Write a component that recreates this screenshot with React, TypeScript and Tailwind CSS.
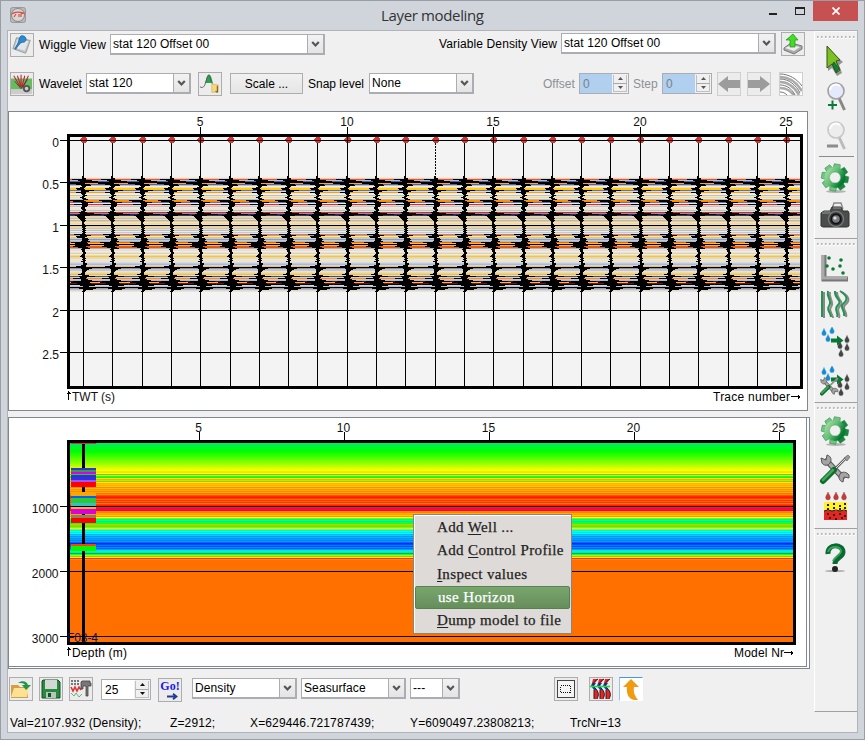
import React from "react";

type Kids = { children?: React.ReactNode };

/* ---------- basic controls ---------- */

function IconButton({ children, className = "" }: Kids & { className?: string }) {
  return (
    <div className={`flex h-6 w-6 shrink-0 items-center justify-center overflow-hidden border border-[#adadb0] bg-[#ececec] ${className}`}>
      {children}
    </div>
  );
}

function Select({ value, className = "" }: { value: string; className?: string }) {
  return (
    <div className={`flex h-[21px] shrink-0 border border-r-2 border-b-2 border-[#abadb3] bg-white ${className}`}>
      <span className="min-w-0 flex-1 pl-[2px] leading-[19px] tracking-[0.1px] whitespace-nowrap">{value}</span>
      <div className="flex w-4 items-center justify-center border-l border-[#abadb3] bg-linear-to-b from-[#f2f2f2] to-[#e4e4e4]">
        <svg width="9" height="7" viewBox="0 0 9 7">
          <path d="M1.2 1l3.3 3.4L7.8 1" fill="none" stroke="#555" strokeWidth="2.2" />
        </svg>
      </div>
    </div>
  );
}

function Spinner({ value, disabled = false }: { value: string; disabled?: boolean }) {
  return (
    <div className={`flex h-[21px] w-[50px] shrink-0 border border-[#abadb3] ${disabled ? "bg-[#b1cfee] text-[#7b8087]" : "bg-white"}`}>
      <span className="flex-1 pl-[3px] leading-5">{value}</span>
      <div className="flex w-4 flex-col bg-[#f2f2f2] p-px">
        {[0, 1].map((k) => (
          <div key={k} className={`flex flex-1 items-center justify-center border-r border-l border-[#c0c0c0] bg-[#f0f0f0] ${k ? "border-t border-b border-t-[#a8a8a8]" : ""}`}>
            <svg width="5" height="3" viewBox="0 0 5 3">
              <path d={k ? "M0 0h5L2.5 3z" : "M0 3h5L2.5 0z"} fill={disabled ? "#555" : "#111"} />
            </svg>
          </div>
        ))}
      </div>
    </div>
  );
}

/* ---------- seismic panel ---------- */

const traces = Array.from({ length: 25 }, (_, i) => Math.round(83 + i * 29.3));

// y, colour, extent to the left of the trace, extent to the right
const rows: [number, string, number, number][] = [
  [176, "#f2f1ea", 1, 0], [177, "#f0eddc", 1, 0], [178, "#cdd2e4", 1, 2], [179, "#ff4a10", 11, 2],
  [180, "#b4bad0", 5, 8], [181, "#5a6298", 3, 14], [182, "#dddde6", 2, 5], [183, "#ffa51a", 14, 1],
  [184, "#5b629a", 7, 6], [185, "#b8bdd2", 2, 7], [186, "#f2efe2", 1, 2], [187, "#f0deb0", 3, 1],
  [188, "#ffcc10", 7, 0], [189, "#ffc908", 6, 1], [190, "#6870a8", 2, 10], [191, "#d8dae4", 2, 5],
  [192, "#ff9b12", 7, 2], [193, "#eee9d8", 2, 2], [194, "#f0f0ea", 1, 1], [195, "#b6c1d0", 0, 3],
  [196, "#eee6c8", 1, 1], [197, "#f6dc91", 3, 0], [198, "#eee6ce", 1, 2], [199, "#afb9cb", 0, 4],
  [200, "#ff9600", 13, 0], [201, "#ff8700", 10, 2], [202, "#6d759e", 2, 9], [203, "#edeae4", 1, 4],
  [204, "#ee2710", 9, 4], [205, "#d9dce7", 1, 4], [206, "#bec5d9", 1, 3], [207, "#f1ead3", 2, 1],
  [208, "#f5e6be", 2, 1], [209, "#e4e4e8", 1, 2], [210, "#bac4d8", 0, 2], [211, "#ecddbd", 2, 1],
  [212, "#d8281f", 4, 3], [213, "#8790b4", 3, 10], [214, "#202c68", 5, 17], [215, "#303765", 8, 6],
  [216, "#d8d6ce", 6, 1], [217, "#efd590", 5, 1], [218, "#b6bdd0", 4, 2], [219, "#f4ddb0", 3, 1],
  [220, "#aeb9ce", 2, 2], [221, "#f1ca84", 1, 1], [222, "#eee2bf", 1, 0], [223, "#f3d897", 1, 0],
  [224, "#f5dfa6", 1, 1], [225, "#151515", 1, 1], [226, "#d0cec9", 1, 2], [227, "#f3d793", 1, 1],
  [228, "#bcc3d3", 0, 2], [229, "#f2e2b2", 1, 1], [230, "#b6bed0", 0, 2], [231, "#f3ecd5", 1, 1],
  [232, "#c3c9db", 0, 2], [233, "#e4e4e7", 1, 1], [234, "#ff731b", 9, 2], [235, "#9ea6bd", 3, 7],
  [236, "#e3e8e8", 7, 3], [237, "#ffcb20", 6, 1], [238, "#c5cad8", 1, 4], [239, "#8f9bb8", 1, 5],
  [240, "#c1c7d6", 1, 4], [241, "#b5b8c4", 2, 6], [242, "#ff5612", 12, 3], [243, "#f5cc33", 8, 4],
  [244, "#262422", 14, 15], [245, "#f6bb27", 8, 6], [246, "#f25918", 10, 2], [247, "#d8561f", 5, 4],
  [248, "#a9b1c8", 1, 6], [249, "#f3e5bf", 2, 1], [250, "#e4dfc9", 1, 1], [251, "#eeeaf0", 1, 1],
  [252, "#f3e3b2", 0, 2], [253, "#d2d2d4", 0, 2], [254, "#eeeae6", 1, 1], [255, "#f1d98e", 2, 1],
  [256, "#f5c737", 3, 1], [257, "#e3d6b1", 1, 1], [258, "#d8dae2", 0, 2], [259, "#f5e4c2", 1, 1],
  [260, "#e7e4de", 0, 2], [261, "#f5e5b6", 2, 1], [262, "#d7dce4", 0, 1], [263, "#c0c9dc", 0, 3],
  [264, "#aeb9d3", 0, 3], [265, "#d2d6dc", 2, 2], [266, "#f3c441", 7, 2], [267, "#454b73", 8, 11],
  [268, "#8a90ac", 2, 8], [269, "#c2c6dc", 1, 5], [270, "#bdc6dd", 1, 3], [271, "#f3e3b8", 1, 2],
  [272, "#e1dcc9", 1, 1], [273, "#f6d267", 2, 1], [274, "#f4c13b", 5, 1], [275, "#dcdbe1", 1, 5],
  [276, "#414c82", 4, 11], [277, "#e9cf95", 3, 3], [278, "#ff871d", 10, 2], [279, "#c1c5d7", 2, 4],
  [280, "#b1b9d0", 2, 8], [281, "#242938", 10, 14], [282, "#f3bd31", 12, 6], [283, "#8c0c12", 6, 7],
  [284, "#282827", 13, 15], [285, "#d2d5dc", 3, 11], [286, "#b5becd", 0, 5], [287, "#191015", 13, 15],
  [288, "#9a9dab", 4, 12], [289, "#b4bccd", 0, 9], [290, "#dadbd8", 0, 2], [291, "#eee4c9", 1, 1],
];

function Axis({ x, y, children, anchor = "end" }: Kids & { x: number; y: number; anchor?: "end" | "middle" | "start" }) {
  return (
    <text x={x} y={y} textAnchor={anchor} fontSize="12" fill="#111">
      {children}
    </text>
  );
}

function SeismicPlot() {
  return (
    <svg className="block" width="798" height="298" viewBox="9 112 798 298" shapeRendering="crispEdges">
      <rect x="67" y="134" width="736" height="255" fill="#000" />
      <rect x="70" y="137" width="730" height="249" fill="#f3f3f3" />
      {rows.map(([y, c]) => (
        <rect key={y} x="70" y={y} width="730" height="1" fill={c} />
      ))}
      {traces.map((x, i) => (
        <g key={x}>
          {i === 12 ? (
            <path d={`M${x + 0.5} 137V178`} stroke="#000" strokeDasharray="2 1" />
          ) : (
            <rect x={x} y="137" width="1" height="41" />
          )}
          <path d={`M${x - 1} 137h3l2 2v2l-2 2h-3l-2-2v-2z`} fill="#d83434" />
          <rect x={x} y="178" width="1" height="208" />
          {rows.map(([y, , l, r]) => {
            const a = Math.max(70, x - l);
            return <rect key={y} x={a} y={y} width={Math.min(800, x + r + 1) - a} height="1" />;
          })}
        </g>
      ))}
      {["0", "0.5", "1", "1.5", "2", "2.5"].map((t, i) => {
        const y = [140, 182, 225, 267, 310, 352][i];
        return (
          <g key={t}>
            <rect x="60" y={y} width="740" height="1" />
            <Axis x={59} y={y + 7}>{t}</Axis>
          </g>
        );
      })}
      {[5, 10, 15, 20, 25].map((n) => (
        <g key={n}>
          <rect x={traces[n - 1]} y="127" width="1" height="18" />
          <Axis x={traces[n - 1]} y={126} anchor="middle">{n}</Axis>
        </g>
      ))}
      <path d="M68.5 391v9M66.5 393.5h4M67.5 392.5h2" stroke="#000" />
      <path d="M791 396.5h9M798.5 394.5v4M799.5 395.5v2" stroke="#000" />
      <Axis x={72} y={401} anchor="start">TWT (s)</Axis>
      <text x="713" y="401" fontSize="12" textLength="77">Trace number</text>
    </svg>
  );
}

/* ---------- layer model panel ---------- */

const layers: [number, string][] = [
  [470, "#ffff00"], [471, "#e6f000"], [472, "#ffe000"], [473, "#ffff00"], [474, "#38e830"], [475, "#fff000"],
  [476, "#30ff00"], [477, "#00ff20"], [478, "#ffe000"], [479, "#ffa800"], [480, "#ffc800"], [481, "#50f010"],
  [482, "#ffe800"], [483, "#ffb000"], [484, "#ffc000"], [485, "#ffb000"], [486, "#ffd000"], [487, "#ff8800"],
  [488, "#ffc000"], [489, "#ff9000"], [490, "#ffa800"], [491, "#ff8800"], [492, "#ffb000"], [493, "#ff7000"],
  [494, "#ff9000"], [495, "#ff5000"], [496, "#ff2800"], [497, "#ff1800"], [498, "#ff3800"], [499, "#ff7000"],
  [500, "#ff3000"], [501, "#ff6800"], [502, "#ff3000"], [503, "#ff8000"], [504, "#ff4000"], [505, "#ff2000"],
  [506, "#000000"], [507, "#ff2000"], [508, "#ff0040"], [509, "#ff0060"], [510, "#ff0038"], [511, "#ff9000"],
  [512, "#ff8000"], [513, "#ffb000"], [514, "#ffa000"], [515, "#ffd000"], [516, "#ff9000"], [517, "#ffff00"],
  [518, "#70ff00"], [519, "#00ff60"], [520, "#00ff90"], [521, "#00e8a0"], [522, "#00ff60"], [523, "#20ff00"],
  [524, "#60ff00"], [525, "#e0b000"], [526, "#60e800"], [527, "#90f000"], [528, "#ffff00"], [529, "#60ff80"],
  [530, "#00ffb0"], [531, "#00ffff"], [532, "#00e0ff"], [533, "#00ffff"], [534, "#00b0ff"], [535, "#00d0ff"],
  [536, "#0090ff"], [537, "#00b8ff"], [538, "#0090ff"], [539, "#00a0ff"], [540, "#0080ff"], [541, "#00a0ff"],
  [542, "#0068ff"], [543, "#0028ff"], [544, "#0048ff"], [545, "#0080ff"], [546, "#0048ff"], [547, "#0090ff"],
  [548, "#0060ff"], [549, "#00a0ff"], [550, "#00e0ff"], [551, "#00ff90"], [552, "#00ff40"], [553, "#0098d0"],
  [554, "#00ff60"], [555, "#a0ff00"], [556, "#ff9800"], [557, "#ffff00"], [558, "#ff3000"], [559, "#ff9800"],
];

const wellLog: [number, number, string][] = [
  [443, 1, "#e03030"], [468, 2, "#3030dc"], [470, 2, "#30a040"], [472, 2, "#dc00dc"], [474, 1, "#30c830"],
  [475, 5, "#3030dc"], [480, 2, "#a050ff"], [482, 5, "#ff0000"], [492, 4, "#ffa500"], [496, 2, "#0060ff"],
  [498, 5, "#30c830"], [503, 3, "#30c0d0"], [507, 2, "#ffb000"], [509, 5, "#dc00dc"], [515, 3, "#908060"],
  [518, 5, "#ff0000"], [544, 2, "#ff4000"], [546, 5, "#00f800"],
];

function ModelPlot() {
  return (
    <svg className="block" width="797" height="248" viewBox="9 418 797 248" shapeRendering="crispEdges">
      <defs>
        <linearGradient id="shallow" x1="0" y1="0" x2="0" y2="1">
          <stop offset="0" stopColor="#00ec60" />
          <stop offset="0.32" stopColor="#00ff00" />
          <stop offset="0.7" stopColor="#80ff00" />
          <stop offset="1" stopColor="#f4ff00" />
        </linearGradient>
      </defs>
      <rect x="67" y="440" width="729" height="205" />
      <rect x="70" y="443" width="723" height="199" fill="#ff7000" />
      <rect x="70" y="443" width="723" height="27" fill="url(#shallow)" />
      {layers.map(([y, c]) => (
        <rect key={y} x="70" y={y} width="723" height="1" fill={c} />
      ))}
      <rect x="82" y="443" width="3" height="199" />
      {wellLog.map(([y, h, c]) => (
        <rect key={y} x="71" y={y} width="25" height={h} fill={c} />
      ))}
      {[1000, 2000, 3000].map((n, i) => {
        const y = 506 + i * 65;
        return (
          <g key={n}>
            <rect x="60" y={y} width="733" height="1" />
            <Axis x={58.5} y={y + 7}>{n}</Axis>
          </g>
        );
      })}
      {[5, 10, 15, 20, 25].map((n, i) => (
        <g key={n}>
          <rect x={199 + i * 145} y="432" width="1" height="8" />
          <Axis x={198.5 + i * 145} y={432} anchor="middle">{n}</Axis>
        </g>
      ))}
      <text x="67" y="642" fontSize="12" textLength="31" fill="#16104c">F03-4</text>
      <path d="M68.5 647v9M66.5 649.5h4M67.5 648.5h2" stroke="#000" />
      <path d="M784 652.5h9M791.5 650.5v4M792.5 651.5v2" stroke="#000" />
      <text x="72" y="657" fontSize="12" textLength="55">Depth (m)</text>
      <text x="734" y="657" fontSize="12" textLength="50">Model Nr</text>
    </svg>
  );
}

/* ---------- icons ---------- */

function Gear() {
  return (
    <svg width="30" height="32" viewBox="0 0 30 32">
      <defs>
        <linearGradient id="gearFill" x1="0" y1="0" x2="1" y2="0.6">
          <stop offset="0" stopColor="#a3dca3" />
          <stop offset="0.5" stopColor="#5fbd72" />
          <stop offset="1" stopColor="#087b32" />
        </linearGradient>
      </defs>
      <ellipse cx="16" cy="28.5" rx="10" ry="1.5" fill="#999" opacity=".7" />
      <g transform="translate(15 14.5)">
        {[0, 45, 90, 135, 180, 225, 270, 315].map((a) => (
          <path key={a} d="M-3.6-8l.6-5.5h6l.6 5.5z" transform={`rotate(${a + 10})`} fill={a > 20 && a < 150 ? "#188741" : "#70c580"} stroke="#2b8247" strokeWidth=".5" />
        ))}
        <circle r="8" fill="none" stroke="url(#gearFill)" strokeWidth="5" />
        <circle r="5.5" fill="#f0f0f0" stroke="#44935a" strokeWidth=".5" />
      </g>
    </svg>
  );
}

function Wrenches() {
  return (
    <g>
      <path d="M5 5l19 20" stroke="#555" strokeWidth="5.5" />
      <path d="M5 5l19 20" stroke="#a9aaa8" strokeWidth="3.5" />
      <path d="M1 4l5 2 1-5c4 1 5 5 3 8s-6 3-8 0zM29 24l-5-1-1 5c-4-1-5-5-3-8s7-2 9 1z" fill="#a4a5a3" stroke="#555" strokeWidth="1" />
      <path d="M13 17L26 4" stroke="#666" strokeWidth="2.6" />
      <path d="M14 16L26 4" stroke="#ddd" />
      <path d="M24 4l4-3 2 2-3 4z" fill="#999" stroke="#555" strokeWidth=".6" />
      <path d="M3 27l11-11" stroke="#106b2d" strokeWidth="6" strokeLinecap="round" />
      <path d="M3 26l10-10" stroke="#40a858" strokeWidth="2.5" strokeLinecap="round" />
    </g>
  );
}

const drop = "M0-5C-1-2-3 0-3 2a3 3 0 006 0C3 0 1-2 0-5z";

function Drops() {
  return (
    <g>
      {[[4, 5], [12, 3], [8, 11]].map(([x, y]) => (
        <path key={x} d={drop} transform={`translate(${x} ${y}) scale(.75)`} fill="#168bd3" stroke="#56b3e6" strokeWidth=".5" />
      ))}
      {[[27, 12], [20, 18], [27, 20], [21, 26]].map(([x, y]) => (
        <path key={`${x}${y}`} d={drop} transform={`translate(${x} ${y}) scale(.75)`} fill="#444" stroke="#777" strokeWidth=".5" />
      ))}
      <path d="M11 11.500h6V8.500l6.500 5-6.500 5v-3h-6z" fill="#087734" />
    </g>
  );
}

function Magnifier({ plus }: { plus: boolean }) {
  return (
    <svg width="30" height="34" viewBox="0 0 30 34">
      <path d="M18 17l5.500 12" stroke={plus ? "#888" : "#bbb"} strokeWidth="3" />
      <circle cx="15" cy="10" r="8" fill={plus ? "#e4eafb" : "#ededed"} stroke={plus ? "#a0a0a0" : "#c7c7c7"} strokeWidth="1.6" />
      <path d="M9 9a6 6 0 0110-4" fill="none" stroke="#fff" strokeWidth="2" />
      {plus ? <path d="M7 24h9M11.5 19.500v9" stroke="#087c38" strokeWidth="2" /> : <path d="M6 26h11" stroke="#8b8b91" strokeWidth="3" />}
    </svg>
  );
}

function Camera() {
  return (
    <svg width="30" height="28" viewBox="0 0 30 28">
      <path d="M12 7l2-6h7l2 6" fill="#eee" stroke="#888" strokeWidth="1.4" />
      <path d="M1 11l3-2h6l2-4h9l2 4h5l1 2v13l-2 1H3l-2-1z" fill="#4b4d4d" stroke="#333" />
      <path d="M2 11h9M4 9h6M13 6h8" stroke="#999" />
      <circle cx="16" cy="17" r="7.500" fill="#2d2f30" stroke="#777" strokeWidth="1.5" />
      <circle cx="16" cy="17" r="4.500" fill="#787b7f" stroke="#111" strokeWidth="1.5" />
      <circle cx="15" cy="16" r="1.6" fill="#ddd" />
    </svg>
  );
}

function Handle() {
  return (
    <svg className="mt-1 block" width="39" height="3" viewBox="0 0 39 3">
      {[0, 1, 2, 3, 4, 5, 6, 7, 8, 9].map((i) => (
        <g key={i}>
          <rect x={i * 4} width="2" height="2" fill="#b6b6b6" />
          <path d={`M${i * 4 + 2} .5v2h-2`} fill="none" stroke="#fff" />
        </g>
      ))}
    </svg>
  );
}

function ToolGroup({ children, className }: Kids & { className: string }) {
  return <div className={`flex shrink-0 flex-col items-center border-b border-l border-b-[#a0a0a0] border-l-white ${className}`}>{children}</div>;
}

function SideBar() {
  return (
    <div className="flex w-[43px] shrink-0 flex-col border-t border-t-[#fafafa]">
      <ToolGroup className="h-[207px]">
        <Handle />
        <svg className="mt-[6px] mr-[3px] block" width="24" height="32" viewBox="0 0 24 32">
          <path d="M5 4l15 13-4 3 3 8-5 3-5-8-4 3z" fill="#555" opacity=".6" />
          <path d="M4 1l13 14-4 1 4 9-4 3-4-9-5 4z" fill="#7cc024" stroke="#315416" />
          <path d="M11 17l5 7-2.500 3-4-8z" fill="#07883c" stroke="#12492a" strokeWidth=".7" />
        </svg>
        <div className="mt-[4px]"><Magnifier plus /></div>
        <div className="mt-[5px]"><Magnifier plus={false} /></div>
        <div className="mt-[2px] h-px w-[35px] bg-[#8c8c8c]" />
        <div className="mt-[6px] mr-[3px]"><Gear /></div>
        <div className="mt-[7px] mr-[3px]"><Camera /></div>
      </ToolGroup>
      <ToolGroup className="h-[164px]">
        <Handle />
        <svg className="mt-[6px] mr-[2px] block" width="30" height="32" viewBox="0 0 30 32">
          <path d="M4 3v24h24" fill="none" stroke="#777" strokeWidth="5" />
          <path d="M3 3v23h24" fill="none" stroke="#aaa" strokeWidth="3" />
          {[[9, 6], [21, 8], [7, 14], [13, 17], [20, 14], [23, 21]].map(([x, y]) => <circle key={x} cx={x} cy={y} r="1.8" fill="#087d30" />)}
        </svg>
        <svg className="mt-[5px] mr-[2px] block" width="32" height="32" viewBox="0 0 32 32">
          <path d="M5 3v26M11 3c-2 7 5 9 1 15-3 4 2 7 2 11M18 3c-1 8 8 9 3 14-5 5 1 7-1 12M23 3c8 5 8 9 3 13-4 4 3 7 1 12" fill="none" stroke="#888" strokeWidth="2" />
          <path d="M3 2v26M9 2c-2 7 5 9 1 15-3 4 2 7 2 11M16 2c-1 8 8 9 3 14-5 5 1 7-1 12M21 2c8 5 8 9 3 13-4 4 3 7 1 12" fill="none" stroke="#249450" strokeWidth="2" />
        </svg>
        <svg className="mt-[6px] mr-px block" width="32" height="31" viewBox="0 0 32 31"><Drops /></svg>
        <svg className="mt-[8px] mr-px block" width="32" height="31" viewBox="0 0 32 31">
          <Drops />
          <g transform="translate(0 11) scale(.62)"><Wrenches /></g>
        </svg>
      </ToolGroup>
      <ToolGroup className="h-[126px]">
        <Handle />
        <div className="mt-[6px] mr-[3px]"><Gear /></div>
        <svg className="mt-[5px] mr-[2px] block" width="32" height="32" viewBox="-1 -1 32 32"><Wrenches /></svg>
        <svg className="mt-[6px] block" width="28" height="31" viewBox="0 0 28 31">
          {[6, 14, 22].map((x) => <path key={x} d={drop} transform={`translate(${x} 5) scale(.8)`} fill="#c63a38" stroke="#913333" strokeWidth=".5" />)}
          <path d="M2 11h23v9H2z" fill="#fff12a" />
          <path d="M2 20h23v9H2z" fill="#e92320" />
          <path d="M2 20l4-1 4 1 4-1 4 1 4-1 3 1" stroke="#111" fill="none" />
          <path d="M5 14h2M11 13h2M17 15h2M22 13h2M5 18h2M11 17h2M17 18h2M22 17h2M5 23h2M11 24h2M17 23h2M22 25h2M7 27h2M13 28h2M19 27h2" stroke="#222" strokeWidth="2" />
        </svg>
      </ToolGroup>
      <ToolGroup className="h-[183px]">
        <Handle />
        <svg className="mt-[7px] mr-[2px] block" width="24" height="34" viewBox="0 0 24 34">
          <ellipse cx="12" cy="28" rx="10" ry="1" fill="#aaa" />
          <path d="M5 11C4 0 20 1 20 9c0 6-8 5-8 12" fill="none" stroke="#0b6831" strokeWidth="5" />
          <path d="M5 9C7 2 18 3 18 8c0 4-7 6-8 10" fill="none" stroke="#37a35b" strokeWidth="2" />
          <circle cx="12" cy="26" r="3" fill="#222" />
        </svg>
      </ToolGroup>
    </div>
  );
}

function ArrowGlyph({ flip = false }: { flip?: boolean }) {
  return (
    <svg width="22" height="18" viewBox="0 0 22 18" transform={flip ? "scale(-1 1)" : undefined}>
      <path d="M0 9l10-8v4h12v8H10v4z" fill="#9c9c9c" />
    </svg>
  );
}

/* ---------- toolbars ---------- */

function ViewBar() {
  return (
    <div className="flex items-start pt-px pl-[2px]">
      <IconButton className="mt-px">
        <svg width="24" height="24" viewBox="0 0 24 24">
          <path d="M6 4l15 3-5 14-14-5z" fill="#c4c6c8" stroke="#888" strokeWidth=".8" />
          <path d="M7 6l12 2-4 10-11-3z" fill="#e2e5e9" />
          <path d="M4 16C10 8 8 4 11 2c7-1 7 8 1 7-2 1-5 4-7 8" fill="#278bd2" stroke="#145991" strokeWidth=".8" />
        </svg>
      </IconButton>
      <span className="mt-[5px] w-[71px] pl-[5px] leading-4 tracking-[0.1px] whitespace-nowrap">Wiggle View</span>
      <Select value="stat 120 Offset 00" className="mt-[2px] ml-[5px] w-[215px]" />
      <span className="mt-1 ml-[114px] w-[122px] leading-4 tracking-[0.12px] whitespace-nowrap">Variable Density View</span>
      <Select value="stat 120 Offset 00" className="mt-px w-[215px]" />
      <IconButton className="ml-[5px]">
        <svg width="22" height="22" viewBox="0 0 22 22">
          <path d="M2 15l7-5 11 3v3l-8 5-10-4z" fill="#aaa" stroke="#777" />
          <path d="M3 15l6-3 9 2-6 4z" fill="#eee" />
          <path d="M8 14V7H4l7-6 5 6h-3v7z" fill="#45dc24" stroke="#19901c" strokeWidth=".7" />
        </svg>
      </IconButton>
    </div>
  );
}

function WaveletBar() {
  return (
    <div className="flex items-start pl-[2px]">
      <IconButton>
        <svg width="24" height="24" viewBox="0 0 24 24">
          <path d="M0 6h23v12H0z" fill="#65bd5f" />
          <path d="M0 18h23v5H0z" fill="#ccc" />
          <path d="M3 3l7 12M7 3l4 12M11 2v14M15 3l-3 12M19 3l-6 13" stroke="#bf2636" strokeWidth="1.2" />
          <path d="M4 9l7 8 7-10" fill="none" stroke="#54333a" />
          <circle cx="17" cy="17" r="3" fill="#ccc" stroke="#555" strokeWidth="2" />
        </svg>
      </IconButton>
      <span className="mt-1 w-[52px] pl-[5px] leading-4">Wavelet</span>
      <Select value="stat 120" className="mt-px w-[105px]" />
      <IconButton className="ml-[7px]">
        <svg width="24" height="24" viewBox="0 0 24 24">
          <path d="M7 11C8 5 9 2 11 2s3 4 4 9z" fill="#27a44f" />
          <path d="M1 15c3 2 5 0 6-4 2-7 3-9 4-9s2 10 5 11" fill="none" stroke="#555" />
          <path d="M14 12l7 1v8h-7z" fill="#f4d77e" stroke="#e0be68" />
          <path d="M20 14v7l-2-1" fill="none" stroke="#57471b" />
        </svg>
      </IconButton>
      <div className="mt-px ml-2 h-[21px] w-[73px] border border-[#adadad] bg-linear-to-b from-[#f1f1f1] to-[#e5e5e5] text-center leading-5">Scale ...</div>
      <span className="mt-1 ml-[5px] w-[61px] leading-4 whitespace-nowrap">Snap level</span>
      <Select value="None" className="mt-px w-[105px]" />
      <span className="mt-1 ml-[69px] w-9 leading-4 text-[#8c9095]">Offset</span>
      <div className="mt-px"><Spinner value="0" disabled /></div>
      <span className="mt-1 ml-1 w-[29px] leading-4 text-[#8c9095]">Step</span>
      <div className="mt-px"><Spinner value="0" disabled /></div>
      <IconButton className="ml-[5px] border-[#cfcfcf]"><ArrowGlyph /></IconButton>
      <IconButton className="ml-[6px] border-[#cfcfcf]"><ArrowGlyph flip /></IconButton>
      <IconButton className="ml-2 border-[#cfcfcf] bg-white">
        <svg width="22" height="22" viewBox="0 0 22 22">
          <path d="M0 4c10 0 17 6 22 14M0 9c9 0 15 6 19 13M0 15c7 0 10 3 14 7" stroke="#aaa" strokeWidth="2.6" fill="none" />
          <path d="M0 1c9 0 17 5 22 12M0 6c9 0 16 6 20 14M0 12c7 0 12 4 15 10M0 19c3 0 5 1 7 3" stroke="#777" fill="none" />
        </svg>
      </IconButton>
    </div>
  );
}

function BottomBar() {
  return (
    <div className="flex h-6 items-start pl-px">
      <IconButton>
        <svg width="22" height="22" viewBox="0 0 22 22">
          <path d="M1 7h7l2 2h8v11H1z" fill="#d69d45" />
          <path d="M4 10h15l-2 9H1z" fill="#ffe193" />
          <path d="M8 5c4-3 9-2 10 2h3l-5 5-4-5h3c-1-2-4-2-7-2z" fill="#239448" />
        </svg>
      </IconButton>
      <IconButton className="ml-[6px]">
        <svg width="20" height="20" viewBox="0 0 20 20">
          <path d="M2 1h15l2 2v16H1V2z" fill="#288941" stroke="#134f26" />
          <path d="M4 1h12v9H4z" fill="#d4d8d5" />
          <path d="M5 13h10v6H5z" fill="#b4c8b9" />
          <path d="M7 14h3v4H7z" fill="#174d28" />
        </svg>
      </IconButton>
      <IconButton className="ml-[6px]">
        <svg width="22" height="22" viewBox="0 0 22 22">
          <path d="M1 3h9M1 6h9" stroke="#777" strokeWidth="2" strokeDasharray="2 1" />
          <path d="M1 9l2 4 2-4 2 4 2-4 2 3" stroke="#d33" strokeWidth="1.6" fill="none" />
          <path d="M1 15l3 3 2-3 3 4 3-3" stroke="#65b577" fill="none" />
          <path d="M12 3h8v2h1v3h-3v10h-2V8h-3v3h-2V4z" fill="#777" stroke="#444" strokeWidth=".8" />
        </svg>
      </IconButton>
      <div className="mt-[2px] ml-2"><Spinner value="25" /></div>
      <IconButton className="mt-px ml-[7px] flex-col">
        <span className="h-3 font-['Liberation_Serif',serif] text-[12px] leading-[11px] font-bold text-[#1717ed]">Go!</span>
        <svg className="ml-1" width="11" height="7" viewBox="0 0 11 7"><path d="M0 3.500h8M6 .8l3.500 2.700L6 6.200" stroke="#233c91" strokeWidth="1.8" fill="none" /></svg>
      </IconButton>
      <Select value="Density" className="mt-px ml-[10px] w-[105px]" />
      <Select value="Seasurface" className="mt-px ml-1 w-[105px]" />
      <Select value="---" className="mt-px ml-1 w-[50px]" />
      <IconButton className="ml-[94px]">
        <svg width="20" height="20" viewBox="0 0 20 20" shapeRendering="crispEdges">
          <path d="M1.5 1.5h17v17h-17z" fill="#f4f4f4" stroke="#444" />
          <path d="M4.500 6.500h10v7h-10z" fill="none" stroke="#111" strokeDasharray="1 1" />
        </svg>
      </IconButton>
      <IconButton className="ml-[11px]">
        <svg width="22" height="22" viewBox="0 0 22 22">
          {[0, 6, 12].map((x) => (
            <g key={x} transform={`translate(${x} 0)`}>
              <path d="M3 1h5L5 5H2z" fill="#e22" />
              <path d="M2 5h4L4 8l3 4H4L1 8z" fill="#2635b6" />
              <path d="M4 12h3c2 3 2 6 0 9H4z" fill="#e22" />
              <path d="M8 1C3 4 2 7 5 10c4 4 4 7 2 11M4 12v9" fill="none" stroke="#222" />
            </g>
          ))}
          <path d="M0 8.500h20" stroke="#11e331" strokeWidth="1.6" />
        </svg>
      </IconButton>
      <IconButton className="ml-[6px] border-white border-t-[#3c9ae8] border-l-[#8fc4f4] bg-white">
        <svg width="22" height="22" viewBox="0 0 22 22">
          <path d="M3 9l8-8 8 8h-5c-1 6 1 9 4 13C10 23 6 18 7 9z" fill="#f09b11" />
        </svg>
      </IconButton>
    </div>
  );
}

function ContextMenu() {
  const items = [
    ["", "Add ", "W", "ell ..."],
    ["", "Add ", "C", "ontrol Profile"],
    ["", "", "I", "nspect values"],
    ["on", "use Horizon", "", ""],
    ["", "", "D", "ump model to file"],
  ];
  return (
    <div className="absolute top-[513px] left-[412px] flex h-[120px] w-[159px] flex-col border border-[#858585] bg-[#dedad7] px-px pt-px font-['Liberation_Serif',serif] text-[15px] leading-[23px] text-[#222] shadow-[inset_1px_1px_0_#fff] [-webkit-text-stroke:0.25px]">
      {items.map(([on, a, key, b]) => (
        <div
          key={a + key}
          className={`h-[23.3px] pl-[22px] tracking-[0.36px] whitespace-pre ${on ? "rounded-[2px] border border-[#588050] bg-linear-to-b from-[#79a66d] to-[#668e5c] pl-[21px] leading-[21px] text-white" : ""}`}
        >
          {a}<span className="underline underline-offset-2">{key}</span>{b}
        </div>
      ))}
    </div>
  );
}

export default function App() {
  return (
    <div className="relative flex h-[740px] w-[865px] flex-col overflow-hidden border border-[#9a9da4] bg-[#d0d5dc] font-['Liberation_Sans',Arial,sans-serif] text-[12px] text-black">
      <div className="flex h-[29px] shrink-0 items-start">
        <svg className="mt-[6px] ml-[9px]" width="16" height="16" viewBox="0 0 16 16">
          <rect x=".5" y=".5" width="15" height="15" rx="2" fill="#b8b8b8" stroke="#999" />
          <circle cx="8" cy="8" r="6.500" fill="#d6d6d6" stroke="#888" />
          <path d="M2 7c3-3 8-2 12-1l-3 1v3M9 7v3M6 7L4 10" fill="none" stroke="#e24a3f" strokeWidth="1.2" />
        </svg>
        <div className="flex-1 pt-1 pl-[355px] font-['Open_Sans',sans-serif] text-[15px] leading-5 tracking-[-0.35px] text-[#333]">Layer modeling</div>
        <div className="mt-3 mr-[18px] h-[2px] w-2 bg-[#222]" />
        <div className="mt-[6px] mr-2 h-2 w-[10px] border border-t-2 border-[#222]" />
        <div className="mr-[6px] flex h-5 w-[45px] items-center justify-center bg-[#c75050]">
          <svg width="8" height="8" viewBox="0 0 8 8"><path d="M.5.5l7 7M7.5.5l-7 7" stroke="#fff" strokeWidth="1.7" /></svg>
        </div>
      </div>
      <div className="mx-[6px] flex h-[703px] shrink-0 border border-[#b0b3b9] bg-[#f0f0f0]">
        <div className="flex w-[806px] shrink-0 flex-col">
          <div className="h-[41px] shrink-0"><ViewBar /></div>
          <div className="h-[39px] shrink-0"><WaveletBar /></div>
          <div className="h-[300px] w-[800px] shrink-0 overflow-hidden border border-[#82868e] bg-white"><SeismicPlot /></div>
          <div className="mt-[6px] h-[252px] w-[802px] shrink-0 border border-[#82868e] bg-white">
            <div className="h-[249px] w-[798px] overflow-hidden border-r border-b border-[#82868e]"><ModelPlot /></div>
          </div>
          <div className="mt-2"><BottomBar /></div>
          <div className="mt-[14px] flex pl-[2px] leading-4 tracking-[0.14px] whitespace-nowrap">
            <span className="w-40">Val=2107.932 (Density);</span>
            <span className="w-20">Z=2912;</span>
            <span className="w-40">X=629446.721787439;</span>
            <span className="w-40">Y=6090497.23808213;</span>
            <span>TrcNr=13</span>
          </div>
        </div>
        <SideBar />
      </div>
      <ContextMenu />
    </div>
  );
}
